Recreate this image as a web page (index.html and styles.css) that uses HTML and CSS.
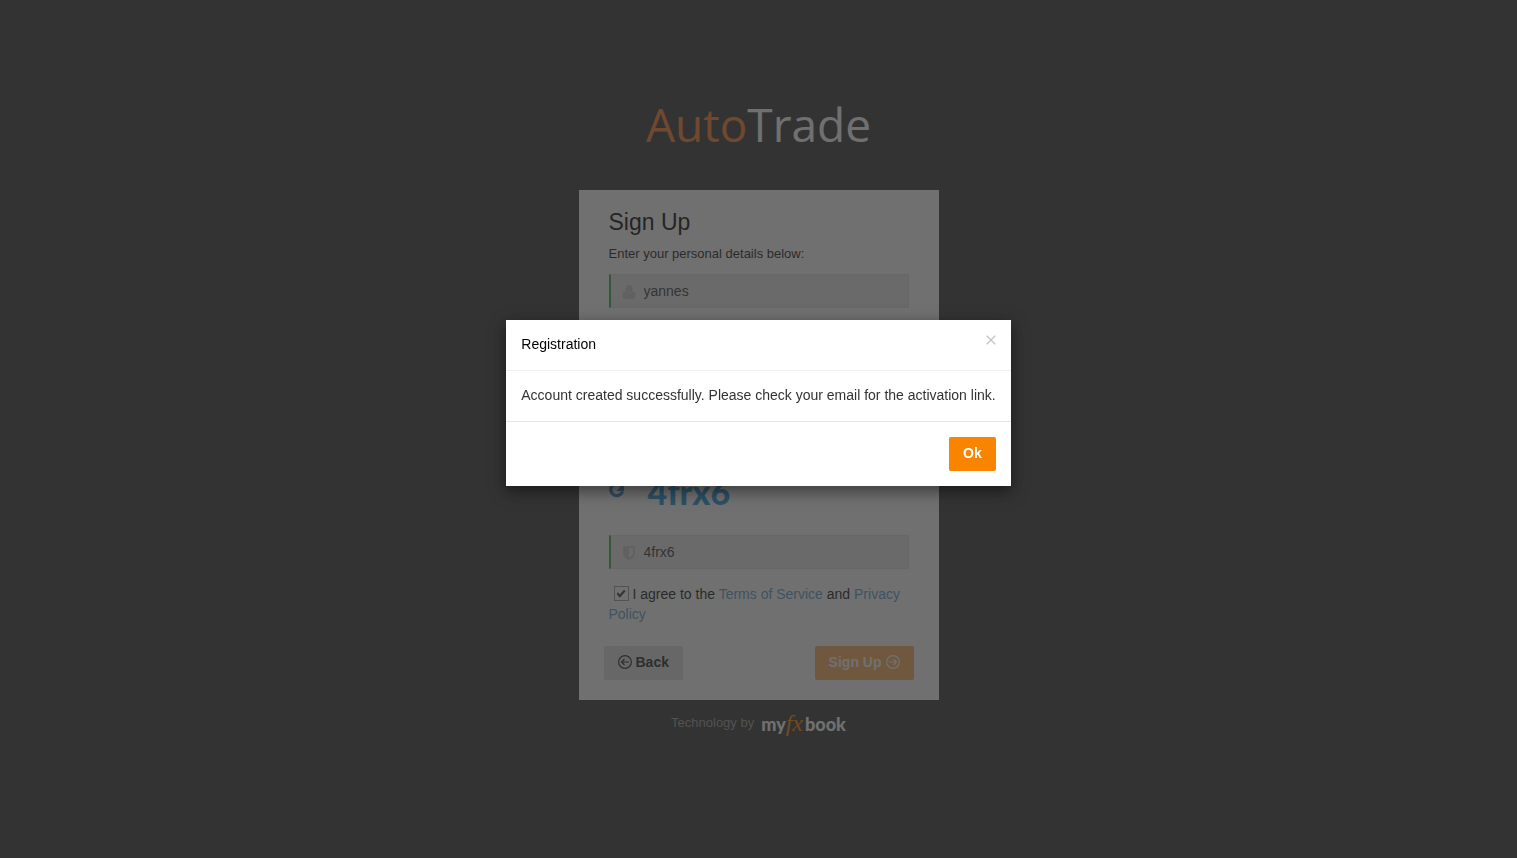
FILE: index.html
```html
<!DOCTYPE html>
<html lang="en">
<head>
<meta charset="utf-8">
<title>AutoTrade</title>
<link rel="stylesheet" href="styles.css">
</head>
<body>
<main class="page">
  <h1 class="logo"><span class="logo-accent">Auto</span>Trade</h1>
  <form class="card">
    <h2 class="card-title">Sign Up</h2>
    <p class="card-hint">Enter your personal details below:</p>
    <div class="field">
      <svg class="field-icon" viewBox="0 0 14 14" aria-hidden="true"><circle cx="7" cy="3.800" r="3.700"/><path d="M3.300 6.200C1.200 6.600.3 9 .3 11.600c0 1.500.9 2.400 2.300 2.400h8.800c1.400 0 2.300-.9 2.300-2.400 0-2.600-.9-5-3-5.400C8.600 8.800 5.400 8.800 3.300 6.200z"/></svg>
      <input class="field-input" type="text" aria-label="Username" value="yannes">
    </div>
    <div class="field"><input class="field-input" type="email" aria-label="Email"></div>
    <div class="field"><input class="field-input" type="password" aria-label="Password"></div>
    <div class="field"><input class="field-input" type="password" aria-label="Repeat password"></div>
    <div class="captcha">
      <svg class="captcha-refresh" viewBox="0 0 16 16" aria-hidden="true"><path d="M12.500 4A6 6 0 1 0 13.500 9.500" fill="none" stroke="#2f87c4" stroke-width="3.200"/><path d="M15 1v8H7.500z" fill="#2f87c4"/></svg>
      <span class="captcha-text">4frx6</span>
    </div>
    <div class="field">
      <svg class="field-icon" viewBox="0 0 14 14" aria-hidden="true"><path fill-rule="evenodd" d="M1 0h12v7.500c0 3-3 5.500-6 6.500-3-1-6-3.500-6-6.500zM7 2v9.700c2-1 4-2.500 4-4.200V2z"/></svg>
      <input class="field-input" type="text" aria-label="Captcha" value="4frx6">
    </div>
    <div class="terms">
      <input class="terms-box" type="checkbox" id="agree" checked><label for="agree">I agree to the </label><a href="#">Terms of Service</a> and <a href="#">Privacy Policy</a>
    </div>
    <div class="actions">
      <button class="btn btn-back" type="button"><svg class="btn-icon" viewBox="0 0 14 14" aria-hidden="true"><circle cx="7" cy="7" r="6.400"/><path d="M11 7H3.500M6.500 4l-3 3 3 3"/></svg> Back</button>
      <button class="btn btn-primary btn-muted" type="submit">Sign Up <svg class="btn-icon" viewBox="0 0 14 14" aria-hidden="true"><circle cx="7" cy="7" r="6.400"/><path d="M3 7h7.500M7.500 4l3 3-3 3"/></svg></button>
    </div>
  </form>
  <footer class="credit">
    <span>Technology by</span>
    <span class="brand">my<i class="brand-fx">fx</i>book</span>
  </footer>
</main>
<div class="overlay">
  <section class="modal" role="dialog" aria-labelledby="modal-title">
    <header class="modal-head">
      <span id="modal-title">Registration</span>
      <button class="close" type="button" aria-label="Close"><svg class="close-icon" viewBox="0 0 10 10" aria-hidden="true"><path d="M.7.7l8.600 8.600M9.300.7L.7 9.300"/></svg></button>
    </header>
    <p class="modal-body">Account created successfully. Please check your email for the activation link.</p>
    <footer class="modal-foot"><button class="btn btn-primary" type="button">Ok</button></footer>
  </section>
</div>
</body>
</html>
```
FILE: styles.css
```css
* { box-sizing: border-box; }

body {
  margin: 0;
  background: #333;
  color: #333;
  font: 14px/20px "Liberation Sans", Arial, sans-serif;
}

.page {
  display: flex;
  flex-direction: column;
  align-items: center;
  min-height: 100vh;
  padding: 90px 16px 40px;
}

.logo {
  margin: 0 0 32px;
  color: #fff;
  font: 500 46px/68px "Open Sans", sans-serif;
}
.logo-accent { color: #f97c25; }

.card {
  width: 100%;
  max-width: 360px;
  padding: 20px 30px;
  background: #fff;
}
.card-title {
  margin: 0 0 10px;
  color: #000;
  font-size: 23px;
  line-height: 24px;
  font-weight: 400;
}
.card-hint { margin: 0 0 10px; font-size: 13px; color: #111; }

.field { position: relative; margin-bottom: 15px; }
.field-icon {
  position: absolute;
  top: 11px;
  left: 13px;
  width: 14px;
  height: 14px;
  fill: #ccc;
}
.field-input {
  display: block;
  width: 100%;
  height: 34px;
  padding: 6px 12px 6px 33px;
  border: 1px solid #e2e2e2;
  border-left: 2px solid #35aa47;
  background: #ebebeb;
  color: #333;
  font: inherit;
}

.captcha {
  display: flex;
  align-items: flex-start;
  gap: 23px;
  height: 50px;
  margin-bottom: 15px;
  padding-top: 12px;
}
.captcha-refresh { width: 16px; height: 16px; }
.captcha-text {
  color: #1f93d8;
  font: 900 34px/20px Lato, sans-serif;
}

.terms { margin-bottom: 22px; color: #111; }
.terms a { color: #5b9bd1; text-decoration: none; }
.terms-box {
  appearance: none;
  display: inline-flex;
  align-items: center;
  justify-content: center;
  width: 15px;
  height: 15px;
  margin: 0 4px 3px 5px;
  border: 1px solid #999;
  vertical-align: middle;
}
.terms-box:checked::before {
  content: "";
  width: 9px;
  height: 8px;
  background: #333;
  clip-path: polygon(0 50%, 16% 32%, 36% 58%, 84% 0, 100% 18%, 36% 100%);
}

.actions {
  display: flex;
  justify-content: space-between;
  margin: 0 -5px;
}
.btn {
  display: inline-flex;
  align-items: center;
  gap: 4px;
  height: 34px;
  padding: 0 14px 2px;
  border: 0;
  border-radius: 2px;
  font: bold 14px/20px "Liberation Sans", Arial, sans-serif;
}
.btn-icon {
  width: 14px;
  height: 14px;
  fill: none;
  stroke: currentColor;
  stroke-width: 1.2;
}
.btn-back { background: #e1e1e1; color: #222; }
.btn-primary { background: #f88400; color: #fff; }
.btn-muted { opacity: .65; }

.credit {
  display: flex;
  align-items: center;
  gap: 7px;
  margin-top: 10px;
  color: #999;
  font-size: 13px;
  line-height: 26px;
}
.brand { color: #fff; font: 900 18px/18px Lato, sans-serif; }
.brand-fx {
  margin-right: 2px;
  color: #f88400;
  font: italic 24px/18px "Liberation Serif", serif;
}

.overlay {
  position: fixed;
  inset: 0;
  display: flex;
  justify-content: center;
  align-items: flex-start;
  padding: 320px 16px 16px;
  background: rgba(51, 51, 51, .7);
}
.modal {
  background: #fff;
  box-shadow: 0 5px 15px rgba(0, 0, 0, .5);
}
.modal-head {
  display: flex;
  justify-content: space-between;
  align-items: flex-start;
  padding: 14px 15px 16px;
  border-bottom: 1px solid #efefef;
  color: #000;
}
.close {
  display: flex;
  padding: 1px 0 0;
  border: 0;
  background: none;
}
.close-icon {
  width: 10px;
  height: 10px;
  fill: none;
  stroke: #c4c4c4;
  stroke-width: 1.3;
}
.modal-body { margin: 0; padding: 14px 15px 16px; }
.modal-foot {
  display: flex;
  justify-content: flex-end;
  padding: 15px;
  border-top: 1px solid #e5e5e5;
}
```
